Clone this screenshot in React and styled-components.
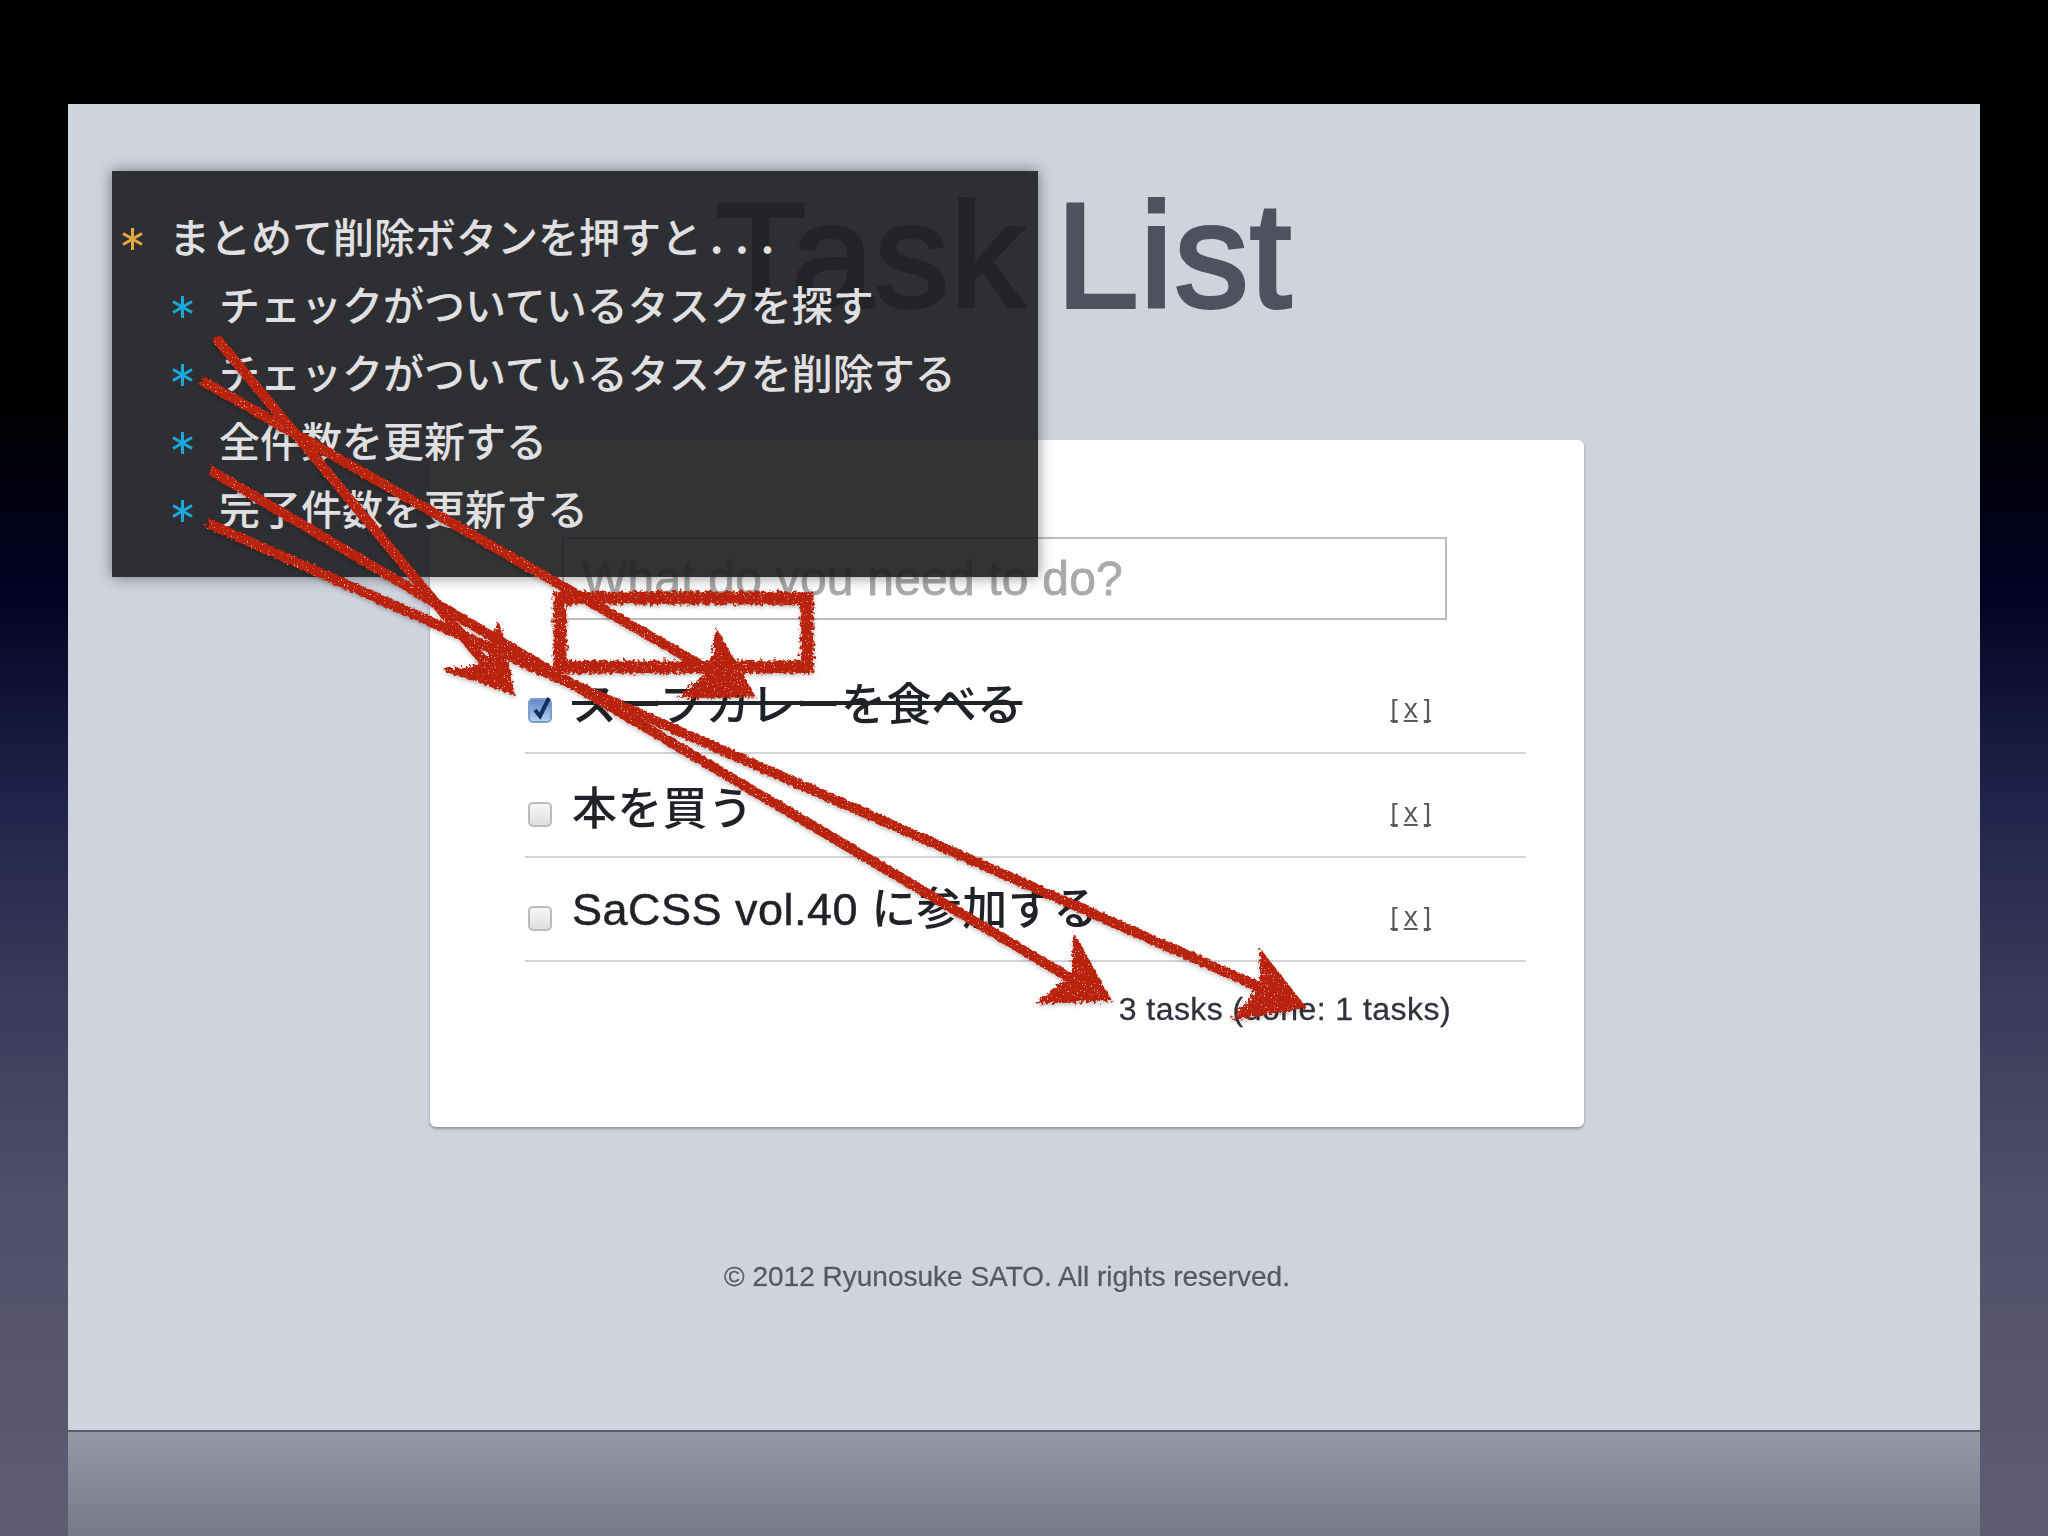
import styled, { createGlobalStyle } from "styled-components";

const GlobalStyle = createGlobalStyle`
  html, body {
    margin: 0;
    padding: 0;
    background: #000;
  }
  * {
    box-sizing: border-box;
  }
`;

const JP = `"Noto Sans CJK JP", "Liberation Sans", sans-serif`;
const LATIN_JP = `"Liberation Sans", "Noto Sans CJK JP", sans-serif`;

const Stage = styled.div`
  position: relative;
  width: 2048px;
  height: 1536px;
  overflow: hidden;
  padding: 104px 68px 0;
  background: linear-gradient(
    180deg,
    #000 0,
    #000 400px,
    #020222 590px,
    #20234a 800px,
    #3b3b5a 1000px,
    #4f4f68 1200px,
    #5f5d72 1536px
  );
`;

const Slide = styled.div`
  position: relative;
  height: 1328px;
  background: #ced3dd;
  border-bottom: 2px solid #565a6a;
`;

const Reflection = styled.div`
  height: 104px;
  background: linear-gradient(180deg, #9799a7, #777888);
`;

const Page = styled.div`
  width: 1154px;
  margin-left: 362px;
  filter: blur(0.7px);
`;

const Title = styled.h1`
  margin: 0;
  padding: 78px 6px 0 0;
  height: 336px;
  text-align: center;
  font: 400 148px/148px ${LATIN_JP};
  letter-spacing: 1.5px;
  word-spacing: -12px;
  color: #4d525e;
  -webkit-text-stroke: 4px #4d525e;
  text-shadow: 0 2px 1px rgba(255, 255, 255, 0.7);
`;

const Card = styled.div`
  height: 687px;
  padding: 97px 58px 0 95px;
  background: #fff;
  border-radius: 6px;
  box-shadow: 0 2px 3px rgba(0, 0, 0, 0.3);
`;

const TaskInput = styled.input`
  display: block;
  width: 885px;
  height: 83px;
  margin: 0 0 30px 37px;
  padding: 0 18px;
  background: #fff;
  border: 2px solid #bdbdc0;
  outline: none;
  font: 400 48px ${LATIN_JP};
  letter-spacing: 0.2px;
  -webkit-text-stroke: 0.8px #a9a9a9;

  &::placeholder {
    color: #a9a9a9;
    opacity: 1;
  }
`;

const List = styled.ul`
  margin: 0;
  padding: 0;
  list-style: none;
`;

const Row = styled.li`
  display: flex;
  align-items: center;
  height: 104px;
  padding: 0 95px 0 3px;
  border-bottom: 2px solid #d5d5d9;
`;

const Check = styled.span`
  flex: none;
  display: block;
  width: 24px;
  height: 25px;
  margin: 19px 20px 0 0;
  border-radius: 5px;
  border: 2px solid ${(props) => (props.$on ? "#7d9ccb" : "#bcbcbc")};
  background: ${(props) =>
    props.$on
      ? "linear-gradient(180deg, #5f88c4, #b4cef0)"
      : "linear-gradient(180deg, #f6f6f6, #dedede)"};
  position: relative;

  svg {
    position: absolute;
    left: 0;
    top: -8px;
  }
`;

const TaskText = styled.span`
  flex: 1;
  font: 500 45px/1 ${JP};
  letter-spacing: 0.3px;
  color: #1f2226;
  text-decoration: ${(props) => (props.$done ? "line-through" : "none")};
`;

const MixedText = styled(TaskText)`
  font-family: ${LATIN_JP};
  letter-spacing: 0.5px;
`;

const LatinPart = styled.span`
  -webkit-text-stroke: 0.5px #1f2226;
`;

const Remove = styled.a`
  margin-top: 16px;
  font: 400 26px/1 ${LATIN_JP};
  color: #55585e;
  text-decoration: underline;
  text-decoration-skip-ink: none;
  text-underline-offset: 2px;
`;

const RemoveMark = styled.span`
  padding: 0 6px;
  font-size: 28px;
`;

const Summary = styled.p`
  margin: 28px 75px 0 0;
  text-align: right;
  font: 400 32px/38px ${LATIN_JP};
  letter-spacing: 0.45px;
  color: #2e333c;
  -webkit-text-stroke: 0.3px #2e333c;
`;

const Copyright = styled.p`
  margin: 132px 0 0;
  text-align: center;
  font: 400 28px/36px ${LATIN_JP};
  color: #545964;
  -webkit-text-stroke: 0.3px #545964;
  text-shadow: 0 1px 1px rgba(255, 255, 255, 0.5);
`;

const Notes = styled.div`
  position: absolute;
  left: 44px;
  top: 67px;
  width: 926px;
  height: 406px;
  padding-top: 30px;
  background: rgba(31, 32, 34, 0.915);
  box-shadow: 0 0 14px rgba(0, 0, 0, 0.45);
  font: 500 41px/68px ${JP};
  color: #e0e0e2;
`;

const Note = styled.div`
  display: flex;
  align-items: center;
  height: 68px;
  padding-left: ${(props) => (props.$sub ? "58px" : "8px")};
`;

const Bullet = styled.svg`
  flex: none;
  width: 25px;
  height: 24px;
  margin: 8px 24px 0 0;
  stroke: ${(props) => (props.$sub ? "#1ca8dc" : "#e4a83e")};
  stroke-width: 3;
  fill: none;
`;

const Dots = styled.span`
  margin-left: 8px;
  letter-spacing: 12px;
  font-weight: 700;
`;

const Scribble = styled.svg`
  position: absolute;
  left: 0;
  top: 0;
  width: 2048px;
  height: 1536px;
  pointer-events: none;
`;

const notes = [
  { text: "まとめて削除ボタンを押すと", dots: true },
  { text: "チェックがついているタスクを探す", sub: true },
  { text: "チェックがついているタスクを削除する", sub: true },
  { text: "全件数を更新する", sub: true },
  { text: "完了件数を更新する", sub: true },
];

// start and end of each hand drawn line
const lines = [
  [216, 338, 506, 688],
  [201, 380, 748, 692],
  [210, 470, 1104, 998],
  [207, 523, 1298, 1004],
];

const heads = [
  "499,623 513,693 445,670 470,668 486,664",
  "717,632 753,695 681,697 700,680 712,668",
  "1075,938 1110,1000 1039,1002 1056,988 1072,975",
  "1261,952 1304,1007 1235,1018 1250,1000 1262,985",
];

function Asterisk({ sub }) {
  return (
    <Bullet $sub={sub} viewBox="0 0 25 24">
      <path d="M12.5 1V23M3 6.5L22 17.5M22 6.5L3 17.5" />
    </Bullet>
  );
}

function CheckMark() {
  return (
    <svg width="24" height="30" viewBox="0 0 24 30">
      <path d="M5 18L10 24L19 6" fill="none" stroke="#10305f" strokeWidth="4" />
    </svg>
  );
}

function Removal() {
  return (
    <Remove>
      [<RemoveMark>x</RemoveMark>]
    </Remove>
  );
}

function App() {
  return (
    <Stage>
      <GlobalStyle />
      <Slide>
        <Page>
          <Title>Task List</Title>
          <Card>
            <TaskInput placeholder="What do you need to do?" />
            <List>
              <Row>
                <Check $on>
                  <CheckMark />
                </Check>
                <TaskText $done>スープカレーを食べる</TaskText>
                <Removal />
              </Row>
              <Row>
                <Check />
                <TaskText>本を買う</TaskText>
                <Removal />
              </Row>
              <Row>
                <Check />
                <MixedText>
                  <LatinPart>SaCSS vol.40</LatinPart> に参加する
                </MixedText>
                <Removal />
              </Row>
            </List>
            <Summary>3 tasks (done: 1 tasks)</Summary>
          </Card>
          <Copyright>© 2012 Ryunosuke SATO. All rights reserved.</Copyright>
        </Page>
        <Notes>
          {notes.map((note) => (
            <Note key={note.text} $sub={note.sub}>
              <Asterisk sub={note.sub} />
              {note.text}
              {note.dots && <Dots>...</Dots>}
            </Note>
          ))}
        </Notes>
      </Slide>
      <Reflection />
      <Scribble viewBox="0 0 2048 1536">
        <defs>
          <filter id="rough" x="-5%" y="-5%" width="110%" height="110%">
            <feTurbulence type="fractalNoise" baseFrequency="0.3" numOctaves="2" seed="4" result="noise" />
            <feDisplacementMap in="SourceGraphic" in2="noise" scale="9" result="drawn" />
            <feTurbulence type="fractalNoise" baseFrequency="0.7" numOctaves="1" seed="9" />
            <feColorMatrix
              type="matrix"
              values="0 0 0 0 0.9  0 0 0 0 0.55  0 0 0 0 0.5  0 0 0 9 -6"
              result="dots"
            />
            <feComposite in="dots" in2="drawn" operator="in" result="specks" />
            <feMerge result="marked">
              <feMergeNode in="drawn" />
              <feMergeNode in="specks" />
            </feMerge>
            <feDropShadow in="marked" dx="0" dy="2" stdDeviation="2" floodOpacity="0.25" />
          </filter>
        </defs>
        <g filter="url(#rough)" fill="#b9220c" stroke="#b9220c">
          <rect x="560" y="598" width="247" height="69" fill="none" strokeWidth="13" />
          {lines.map(([x1, y1, x2, y2]) => (
            <line key={x1 + y1} x1={x1} y1={y1} x2={x2} y2={y2} strokeWidth="10" />
          ))}
          {heads.map((points) => (
            <polygon key={points} points={points} strokeWidth="3" />
          ))}
        </g>
      </Scribble>
    </Stage>
  );
}

export default App;
